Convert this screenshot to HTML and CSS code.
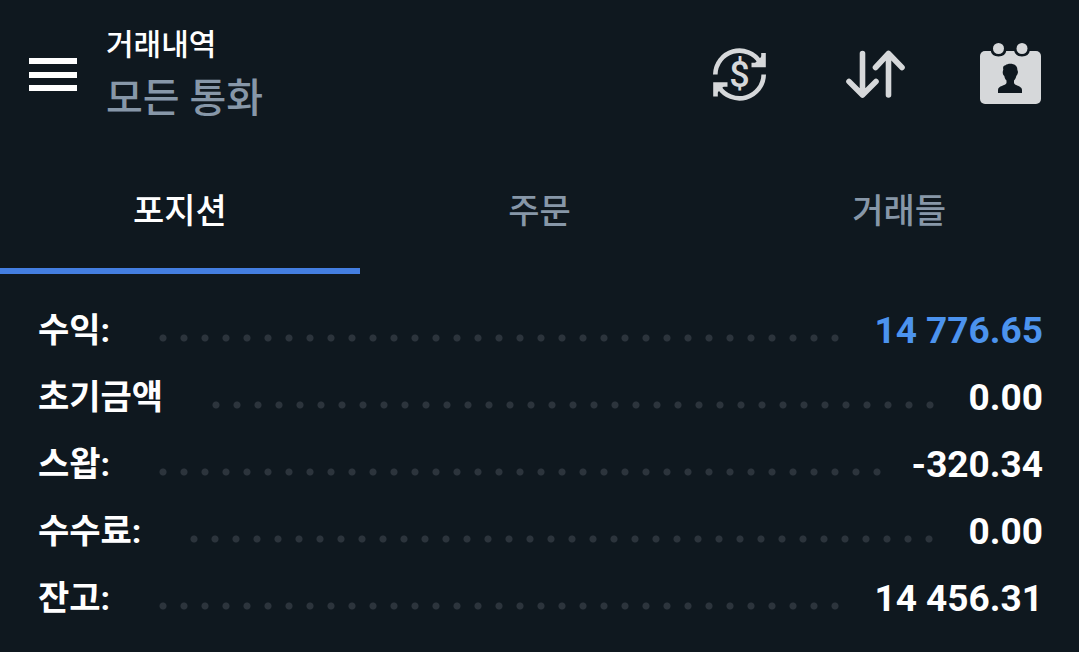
FILE: index.html
```html
<!DOCTYPE html>
<html lang="ko">
<head>
    <meta charset="UTF-8">
    <meta name="viewport" content="width=device-width, initial-scale=1.0">
    <title>거래내역</title>
    <link rel="stylesheet" href="styles.css">
</head>
<body>
    <header class="header">
        <button class="icon-button" type="button" aria-label="메뉴">
            <svg width="48" height="34" viewBox="0 0 48 34" fill="#fff">
                <rect y="0" width="48" height="6"/>
                <rect y="14" width="48" height="6"/>
                <rect y="27" width="48" height="6"/>
            </svg>
        </button>
        <div class="heading">
            <h1 class="title">거래내역</h1>
            <p class="subtitle">모든 통화</p>
        </div>
        <div class="actions">
            <button class="icon-button" type="button" aria-label="통화 선택">
                <svg width="80" height="80" viewBox="0 0 80 80" fill="none" stroke="currentColor" stroke-width="4.6">
                    <path d="M15.3 39.5A24.2 24.2 0 0 1 60 27"/>
                    <path d="M63.7 39.5A24.2 24.2 0 0 1 19 52"/>
                    <path d="M63.5 18V30H51.5M15.5 61.5V49.5H27.5"/>
                    <path d="M55 28L62 21V29ZM24 51L17 58V50Z" fill="currentColor" stroke="none"/>
                    <text class="dollar" x="39.5" y="52" text-anchor="middle">$</text>
                </svg>
            </button>
            <button class="icon-button" type="button" aria-label="정렬">
                <svg width="80" height="80" viewBox="0 0 80 80" fill="none" stroke="currentColor" stroke-width="5.6" stroke-linecap="round" stroke-linejoin="round">
                    <path d="M27.5 18.5V60M14 46.5L27.5 60L41 46.5"/>
                    <path d="M53.5 60V18.5M40.5 32.5L53.5 18.5L67 32.5"/>
                </svg>
            </button>
            <button class="icon-button" type="button" aria-label="기간">
                <svg width="80" height="80" viewBox="0 0 80 80" fill="currentColor">
                    <rect x="10" y="16" width="61" height="53" rx="5"/>
                    <g fill="#0f181f">
                        <path d="M20.500 12V15Q21.500 21.500 28.500 21.500T36.500 15V12ZM44 12V15Q45 21.500 52 21.500T60 15V12Z"/>
                        <path d="M40.300 28.700C44.500 28.700 47.500 31 47.300 34.500L48 37C47.800 39 47 40 46.300 41C45.800 43 45 44.500 44 45.500V48C45 51 52 50.500 52 55V58H28V55C28 50.500 35.500 51 36.500 48V45.500C35.500 44.500 34.700 43 34.300 41C33.200 40 32.700 39 32.700 37L33.300 34.500C32.500 31.500 34 30.500 35.500 30.200C36.500 29.200 38.300 28.700 40.300 28.700Z"/>
                    </g>
                    <circle cx="28.500" cy="13.500" r="5.500"/>
                    <circle cx="52" cy="13.500" r="5.500"/>
                </svg>
            </button>
        </div>
    </header>

    <nav class="tabs">
        <a class="tab active" href="#positions">포지션</a>
        <a class="tab" href="#orders">주문</a>
        <a class="tab" href="#deals">거래들</a>
    </nav>

    <dl class="summary" id="positions">
        <div class="row">
            <dt>수익:</dt>
            <dd class="profit">14 776.65</dd>
        </div>
        <div class="row">
            <dt>초기금액</dt>
            <dd>0.00</dd>
        </div>
        <div class="row">
            <dt>스왑:</dt>
            <dd>-320.34</dd>
        </div>
        <div class="row">
            <dt>수수료:</dt>
            <dd>0.00</dd>
        </div>
        <div class="row">
            <dt>잔고:</dt>
            <dd>14 456.31</dd>
        </div>
    </dl>
</body>
</html>
```

FILE: styles.css
```css
* {
    box-sizing: border-box;
}
body {
    margin: 0;
    background-color: #0f181f;
    color: #fff;
    font-family: Roboto, "Noto Sans CJK KR", sans-serif;
}

/* header */
.header {
    display: flex;
    align-items: center;
    min-height: 150px;
    padding: 0 29px;
}
.icon-button {
    padding: 0;
    border: none;
    background: none;
    color: #d6d8da;
    cursor: pointer;
}
.icon-button svg {
    display: block;
}
.dollar {
    fill: currentColor;
    stroke: none;
    font-family: Roboto, sans-serif;
    font-size: 36px;
    font-weight: 500;
}
.heading {
    flex: 1;
    padding: 0 0 6px 29px;
}
.title,
.subtitle {
    margin: 0;
    font-weight: 500;
    line-height: 54px;
}
.title {
    font-size: 30px;
}
.subtitle {
    color: #8797a8;
    font-size: 40px;
}
.actions {
    display: flex;
    gap: 55px;
}

/* tabs */
.tabs {
    display: grid;
    grid-template-columns: repeat(3, 1fr);
}
.tab {
    padding: 34px 0 30px;
    border-bottom: 6px solid transparent;
    color: #8797a8;
    font-size: 34px;
    font-weight: 500;
    line-height: 54px;
    text-align: center;
    text-decoration: none;
}
.tab.active {
    border-color: #447ee0;
    color: #fff;
}

/* account summary */
.summary {
    margin: 0;
    padding: 23px 36px 20px 38px;
}
.row {
    display: flex;
    align-items: center;
    font-weight: 700;
    line-height: 67px;
}
.row dt {
    display: flex;
    flex: 1;
    align-items: center;
    font-size: 34px;
}
/* dotted leader between the label and the amount */
.row dt::after {
    content: "";
    flex: 1;
    height: 22px;
    margin: 0 31px 0 36px;
    background: radial-gradient(circle at 17px 18px, #2c343c 3px, transparent 4px) left top / 21px 22px repeat-x;
}
.row dd {
    margin: 0;
    font-size: 37px;
}
.row .profit {
    color: #4c93ee;
}
```
